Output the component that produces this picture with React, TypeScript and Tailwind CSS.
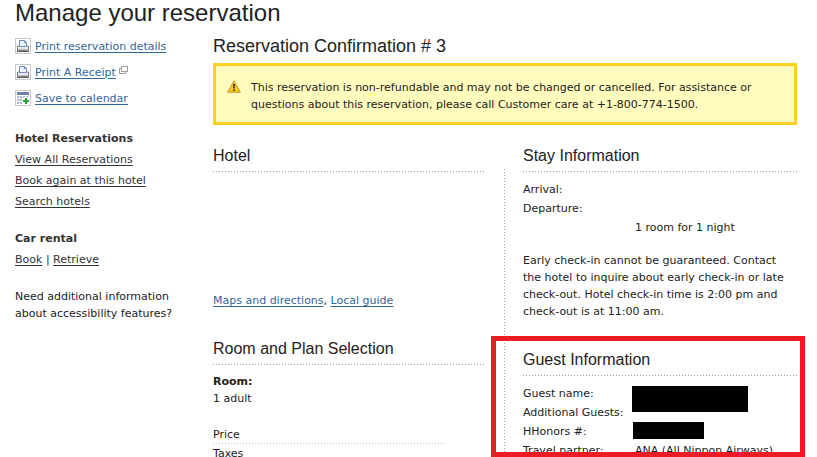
import type { ReactNode } from "react";

function PrinterIcon() {
	return (
		<svg aria-hidden="true" className="size-4 shrink-0" viewBox="0 0 16 16">
			<rect fill="#fff" height="15" stroke="#c8c8c8" width="15" x=".5" y=".5" />
			<path d="M3 7h10l1 2v5H2V9z" fill="#b9b9bb" />
			<path d="M2 8h1v6H2zM13 8h1v6h-1z" fill="#77777c" />
			<path d="M4.5 8.5v-6h5l2 2v4z" fill="#eaf1fb" stroke="#6f8fc0" />
			<path d="M9.5 2.5v2h2" fill="none" stroke="#6f8fc0" />
			<path d="M3 9h10v2H3z" fill="#e9e9ea" />
			<path d="M2 13h12v1H2z" fill="#58585d" />
			<path d="M4 12h8v1H4z" fill="#85858a" />
		</svg>
	);
}

function CalendarIcon() {
	return (
		<svg
			aria-hidden="true"
			className="size-4 shrink-0"
			shapeRendering="crispEdges"
			viewBox="0 0 16 16"
		>
			<rect fill="#fff" height="15" stroke="#c8c8c8" width="15" x=".5" y=".5" />
			<path d="M2 2h12v3H2z" fill="#6a82a8" />
			<path
				d="M2 6h2v2H2zM5 6h2v2H5zM8 6h2v2H8zM11 6h2v2h-2zM2 9h2v2H2zM5 9h2v2H5zM2 12h2v2H2zM5 12h2v2H5z"
				fill="#a9b5c9"
			/>
			<path d="M9 7h4v2h2v4h-2v2H9v-2H7V9h2z" fill="#fff" />
			<path d="M10 8h2v2h2v2h-2v2h-2v-2H8v-2h2z" fill="#25a336" />
		</svg>
	);
}

function NewWindowIcon() {
	return (
		<svg
			aria-hidden="true"
			className="mb-1 ml-[3px] h-2 w-[9px]"
			shapeRendering="crispEdges"
			viewBox="0 0 9 8"
		>
			<path
				d="M2.5.5h6v5h-6zM2.5 2.5h-2v5h6v-2"
				fill="none"
				stroke="#a0a0a0"
			/>
		</svg>
	);
}

function WarningIcon() {
	return (
		<svg
			aria-hidden="true"
			className="mt-px h-[13px] w-[14px] shrink-0"
			viewBox="0 0 14 13"
		>
			<path
				d="M7 .8 13.3 12.2H.7z"
				fill="#fbc926"
				stroke="#c8951a"
				strokeLinejoin="round"
			/>
			<path d="M6.2 4h1.6v4.5H6.2zM6.2 9.5h1.6V11H6.2z" fill="#3d3010" />
		</svg>
	);
}

function ActionLink({ icon, children }: { icon: ReactNode; children: string }) {
	return (
		<a className="flex items-center gap-1 text-[#336699]" href="#">
			{icon}
			<span className="underline underline-offset-2">{children}</span>
		</a>
	);
}

function TextLink({ children }: { children: string }) {
	return (
		<a className="underline underline-offset-2" href="#">
			{children}
		</a>
	);
}

function SectionHeading({ children }: { children: string }) {
	return (
		<>
			<h3 className="pb-1 font-['Liberation_Sans',Arial,sans-serif] text-[16px] leading-[22px]">
				{children}
			</h3>
			<div className="mb-2 h-px bg-[repeating-linear-gradient(90deg,#a0a0a0_0_1px,transparent_1px_3px)]" />
		</>
	);
}

function Sidebar() {
	return (
		<aside className="w-[198px] shrink-0 pt-[7px]">
			<ul>
				<li className="flex h-[26px] items-center">
					<ActionLink icon={<PrinterIcon />}>
						Print reservation details
					</ActionLink>
				</li>
				<li className="flex h-[26px] items-center">
					<ActionLink icon={<PrinterIcon />}>Print A Receipt</ActionLink>
					<NewWindowIcon />
				</li>
				<li className="flex h-[26px] items-center">
					<ActionLink icon={<CalendarIcon />}>Save to calendar</ActionLink>
				</li>
			</ul>

			<nav className="mt-[17px] leading-[21px] text-[#333]">
				<h2 className="font-bold">Hotel Reservations</h2>
				<ul>
					<li>
						<TextLink>View All Reservations</TextLink>
					</li>
					<li>
						<TextLink>Book again at this hotel</TextLink>
					</li>
					<li>
						<TextLink>Search hotels</TextLink>
					</li>
				</ul>
				<h2 className="mt-4 font-bold">Car rental</h2>
				<p>
					<TextLink>Book</TextLink> | <TextLink>Retrieve</TextLink>
				</p>
			</nav>

			<p className="mt-[18px] w-[170px]">
				Need additional information about accessibility features?
			</p>
		</aside>
	);
}

function StayInformation() {
	return (
		<section>
			<SectionHeading>Stay Information</SectionHeading>
			<dl className="grid grid-cols-[112px_1fr] auto-rows-[19px] leading-[19px]">
				<dt>Arrival:</dt>
				<dd />
				<dt>Departure:</dt>
				<dd />
				<dt />
				<dd>1 room for 1 night</dd>
			</dl>
			<p className="mt-[15px]">
				Early check-in cannot be guaranteed. Contact the hotel to inquire about
				early check-in or late check-out. Hotel check-in time is 2:00 pm and
				check-out is at 11:00 am.
			</p>
		</section>
	);
}

function GuestInformation() {
	return (
		<section className="relative mt-[29px]">
			<SectionHeading>Guest Information</SectionHeading>
			<dl className="grid grid-cols-[112px_1fr] auto-rows-[19px] leading-[19px]">
				<dt className="col-start-1">Guest name:</dt>
				<dd className="col-start-2 row-span-2 -ml-[3px] mt-0.5 h-[26px] w-[116px] bg-black" />
				<dt className="col-start-1 row-start-2">Additional Guests:</dt>
				<dt>HHonors #:</dt>
				<dd className="-ml-0.5 h-[17px] w-[71px] bg-black" />
				<dt>Travel partner:</dt>
				<dd>ANA (All Nippon Airways)</dd>
			</dl>
			<div className="absolute -top-[13px] -right-2 -left-8 bottom-[3px] border-5 border-[#ed1c24]" />
		</section>
	);
}

export default function App() {
	return (
		<div className="h-screen overflow-hidden bg-white pr-5 pl-[15px] font-['DejaVu_Sans',Verdana,sans-serif] text-[11px] leading-[17px] text-[#222]">
			<h1 className="font-['Liberation_Sans',Arial,sans-serif] text-[24px] leading-[26px]">
				Manage your reservation
			</h1>
			<div className="flex">
				<Sidebar />
				<main className="min-w-0 flex-1 pt-2">
					<h2 className="font-['Liberation_Sans',Arial,sans-serif] text-[18px] leading-6">
						Reservation Confirmation # 3
					</h2>
					<div
						className="mt-[5px] flex gap-2.5 border-3 border-[#ffd024] bg-[#fffcbd] px-[11px] pt-[13px] pb-[9px]"
						role="alert"
					>
						<WarningIcon />
						<p>
							This reservation is non-refundable and may not be changed or
							cancelled. For assistance or questions about this reservation,
							please call Customer care at +1-800-774-1500.
						</p>
					</div>

					<div className="mt-5 grid grid-cols-2">
						<div className="pr-5">
							<section>
								<SectionHeading>Hotel</SectionHeading>
								<p className="pt-28">
									<a
										className="text-[#336699] underline underline-offset-2"
										href="#"
									>
										Maps and directions
									</a>
									,{" "}
									<a
										className="text-[#336699] underline underline-offset-2"
										href="#"
									>
										Local guide
									</a>
								</p>
							</section>
							<section className="mt-[29px]">
								<SectionHeading>Room and Plan Selection</SectionHeading>
								<p className="font-bold">Room:</p>
								<p>1 adult</p>
								<ul className="mt-5 mr-10">
									<li className="leading-4">Price</li>
									<li
										aria-hidden="true"
										className="h-px bg-[repeating-linear-gradient(90deg,#c4c4c4_0_1px,transparent_1px_3px)]"
									/>
									<li className="leading-5">Taxes</li>
								</ul>
							</section>
						</div>
						<div className="relative pl-[18px]">
							<div className="absolute top-6 bottom-0 -left-px w-px bg-[repeating-linear-gradient(180deg,#a0a0a0_0_1px,transparent_1px_3px)]" />
							<StayInformation />
							<GuestInformation />
						</div>
					</div>
				</main>
			</div>
		</div>
	);
}
